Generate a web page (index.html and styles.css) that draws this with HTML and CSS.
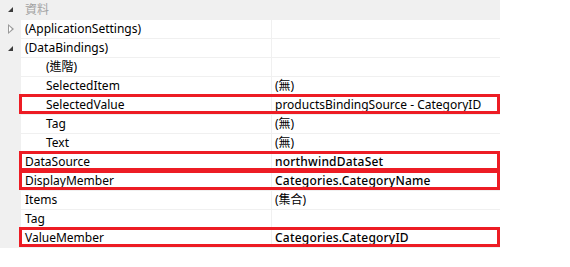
FILE: index.html
```html
<!DOCTYPE html>
<html lang="zh-Hant">
<head>
  <meta charset="UTF-8">
  <title>屬性</title>
  <link rel="stylesheet" href="styles.css">
</head>
<body>
  <div class="props">
    <div class="cat">
      <span class="gutter"><span class="open"></span></span>
      <span class="cat-name">資料</span>
    </div>
    <div class="row">
      <span class="gutter"><span class="closed"></span></span>
      <span class="name">(ApplicationSettings)</span>
      <span class="value"></span>
    </div>
    <div class="row">
      <span class="gutter"><span class="open"></span></span>
      <span class="name">(DataBindings)</span>
      <span class="value"></span>
    </div>
    <div class="row">
      <span class="gutter"></span>
      <span class="name sub">(進階)</span>
      <span class="value"></span>
    </div>
    <div class="row">
      <span class="gutter"></span>
      <span class="name sub">SelectedItem</span>
      <span class="value">(無)</span>
    </div>
    <div class="row marked">
      <span class="gutter"></span>
      <span class="name sub">SelectedValue</span>
      <span class="value">productsBindingSource - CategoryID</span>
    </div>
    <div class="row">
      <span class="gutter"></span>
      <span class="name sub">Tag</span>
      <span class="value">(無)</span>
    </div>
    <div class="row">
      <span class="gutter"></span>
      <span class="name sub">Text</span>
      <span class="value">(無)</span>
    </div>
    <div class="row marked">
      <span class="gutter"></span>
      <span class="name">DataSource</span>
      <span class="value changed">northwindDataSet</span>
    </div>
    <div class="row marked">
      <span class="gutter"></span>
      <span class="name">DisplayMember</span>
      <span class="value changed">Categories.CategoryName</span>
    </div>
    <div class="row">
      <span class="gutter"></span>
      <span class="name">Items</span>
      <span class="value">(集合)</span>
    </div>
    <div class="row">
      <span class="gutter"></span>
      <span class="name">Tag</span>
      <span class="value"></span>
    </div>
    <div class="row marked">
      <span class="gutter"></span>
      <span class="name">ValueMember</span>
      <span class="value changed">Categories.CategoryID</span>
    </div>
  </div>
</body>
</html>
```

FILE: styles.css
```css
* { box-sizing: border-box; }

body {
  margin: 0;
  background: #fff;
  font-family: "Noto Sans", "Noto Sans CJK TC", sans-serif;
  font-size: 12px;
  color: #000;
}

.props {
  width: 500px;
}

.cat,
.row {
  display: grid;
  grid-template-columns: 21px 250px 229px;
  position: relative;
}

.cat {
  height: 20px;
  background: #f0f0f0;
  line-height: 20px;
}

.cat-name {
  grid-column: 2 / 4;
  padding-left: 4px;
  color: #a2a2a2;
}

.row {
  height: 19px;
  line-height: 18px;
  border-bottom: 1px solid #f0f0f0;
}

.gutter {
  background: #f0f0f0;
  position: relative;
}

.name {
  padding-left: 4px;
  white-space: nowrap;
  overflow: hidden;
}

.name.sub {
  padding-left: 25px;
}

.value {
  border-left: 1px solid #f0f0f0;
  padding-left: 3px;
  white-space: nowrap;
  overflow: hidden;
}

.value.changed {
  font-weight: 500;
  letter-spacing: 0.2px;
}

/* expander glyphs */
.open {
  position: absolute;
  left: 8px;
  top: 7px;
  width: 0;
  height: 0;
  border-left: 5px solid transparent;
  border-bottom: 5px solid #3c3c3c;
}

.closed {
  position: absolute;
  left: 8px;
  top: 4px;
  width: 0;
  height: 0;
  border-top: 5px solid transparent;
  border-bottom: 5px solid transparent;
  border-left: 6px solid #999;
}

.closed::after {
  content: "";
  position: absolute;
  left: -5px;
  top: -3px;
  border-top: 3px solid transparent;
  border-bottom: 3px solid transparent;
  border-left: 3px solid #fff;
}

/* red annotation boxes */
.marked::after {
  content: "";
  position: absolute;
  left: 19px;
  right: 0;
  top: -2px;
  bottom: 0;
  border: 3px solid #ed1c24;
  pointer-events: none;
}
```
